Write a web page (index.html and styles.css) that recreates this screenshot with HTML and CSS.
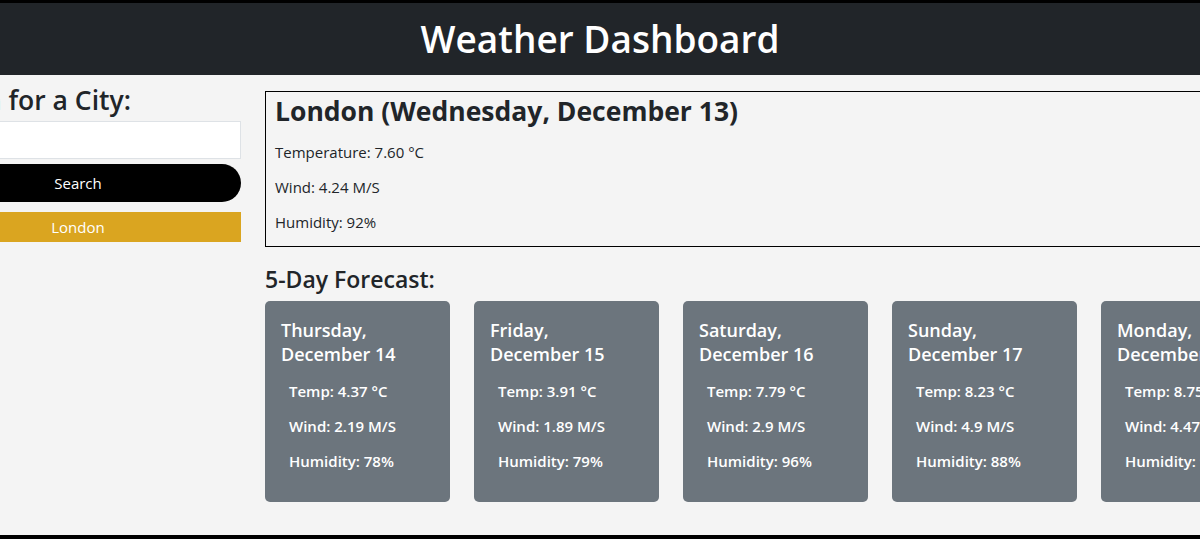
FILE: index.html
```html
<!DOCTYPE html>
<html lang="en">
<head>
<meta charset="utf-8">
<title>Weather Dashboard</title>
<link rel="stylesheet" href="styles.css">
</head>
<body>
<div class="page">
  <header class="topbar">
    <h1 class="title">Weather Dashboard</h1>
  </header>
  <div class="layout">
    <aside class="sidebar">
      <h3 class="search-title">Search for a City:</h3>
      <input class="city-input" type="text" aria-label="City">
      <button class="search-btn" type="button">Search</button>
      <button class="history-btn" type="button">London</button>
    </aside>
    <main class="content">
      <section class="today">
        <h2 class="today-title">London (Wednesday, December 13)</h2>
        <p class="today-line">Temperature: 7.60 °C</p>
        <p class="today-line">Wind: 4.24 M/S</p>
        <p class="today-line">Humidity: 92%</p>
      </section>
      <h4 class="forecast-title">5-Day Forecast:</h4>
      <div class="cards">
        <div class="card">
          <h5 class="card-title">Thursday,<br>December 14</h5>
          <p class="card-line">Temp: 4.37 °C</p>
          <p class="card-line">Wind: 2.19 M/S</p>
          <p class="card-line">Humidity: 78%</p>
        </div>
        <div class="card">
          <h5 class="card-title">Friday,<br>December 15</h5>
          <p class="card-line">Temp: 3.91 °C</p>
          <p class="card-line">Wind: 1.89 M/S</p>
          <p class="card-line">Humidity: 79%</p>
        </div>
        <div class="card">
          <h5 class="card-title">Saturday,<br>December 16</h5>
          <p class="card-line">Temp: 7.79 °C</p>
          <p class="card-line">Wind: 2.9 M/S</p>
          <p class="card-line">Humidity: 96%</p>
        </div>
        <div class="card">
          <h5 class="card-title">Sunday,<br>December 17</h5>
          <p class="card-line">Temp: 8.23 °C</p>
          <p class="card-line">Wind: 4.9 M/S</p>
          <p class="card-line">Humidity: 88%</p>
        </div>
        <div class="card">
          <h5 class="card-title">Monday,<br>December 18</h5>
          <p class="card-line">Temp: 8.75 °C</p>
          <p class="card-line">Wind: 4.47 M/S</p>
          <p class="card-line">Humidity: 90%</p>
        </div>
      </div>
    </main>
  </div>
</div>
</body>
</html>
```
FILE: styles.css
```css
* { box-sizing: border-box; }
html, body { margin: 0; padding: 0; }
body {
  font-family: "Open Sans", "Noto Sans", sans-serif;
  color: #212529;
  background: #f4f4f4;
  overflow: hidden;
}
.page {
  height: 539px;
  border-top: 3px solid #000;
  border-bottom: 4px solid #000;
  overflow: hidden;
  display: flex;
  flex-direction: column;
}
.topbar {
  background: #212529;
  height: 72px;
  flex: none;
  display: flex;
  align-items: center;
  justify-content: center;
}
.title {
  margin: 0;
  color: #fff;
  font-size: 37px;
  font-weight: 600;
  line-height: 1.2;
}
.layout {
  display: flex;
  gap: 24px;
  flex: 1;
}
.sidebar {
  flex: none;
  width: 326px;
  margin-left: -85px;
  display: flex;
  flex-direction: column;
  padding-top: 10px;
}
.search-title {
  margin: 0 0 5px 0;
  font-size: 26.5px;
  font-weight: 600;
  line-height: 31px;
  padding-left: 0;
  white-space: nowrap;
}
.city-input {
  height: 38px;
  border: 1px solid #dee2e6;
  background: #fff;
  font: inherit;
  padding: 6px 12px;
  margin: 0;
}
.search-btn {
  margin-top: 5px;
  height: 38px;
  border: none;
  background: #000;
  color: #fff;
  border-radius: 0 19px 19px 0;
  font-family: inherit;
  font-size: 15px;
}
.history-btn {
  margin-top: 10px;
  height: 30px;
  border: none;
  background: #daa520;
  color: #fff;
  font-family: inherit;
  font-size: 15px;
}
.content {
  flex: none;
  width: 1100px;
  padding-top: 16px;
}
.today {
  border: 1px solid #000;
  padding: 2px 9px 1px 9px;
}
.today-title {
  margin: 0 0 12px 0;
  font-size: 26.5px;
  font-weight: 700;
  line-height: 34px;
}
.today-line {
  margin: 0 0 11px 0;
  font-size: 15px;
  line-height: 24px;
}
.forecast-title {
  margin: 18px 0 7px 0;
  font-size: 23px;
  font-weight: 600;
  line-height: 29px;
}
.cards {
  display: flex;
  gap: 24px;
}
.card {
  flex: none;
  width: 185px;
  height: 201px;
  background: #6c757d;
  color: #fff;
  border-radius: 5px;
  padding: 17px 16px 0 16px;
}
.card-title {
  margin: 0 0 13px 0;
  font-size: 18px;
  font-weight: 600;
  line-height: 24px;
  white-space: nowrap;
}
.card-line {
  margin: 0 0 11px 8px;
  font-size: 15px;
  font-weight: 600;
  line-height: 24px;
  white-space: nowrap;
}
```
